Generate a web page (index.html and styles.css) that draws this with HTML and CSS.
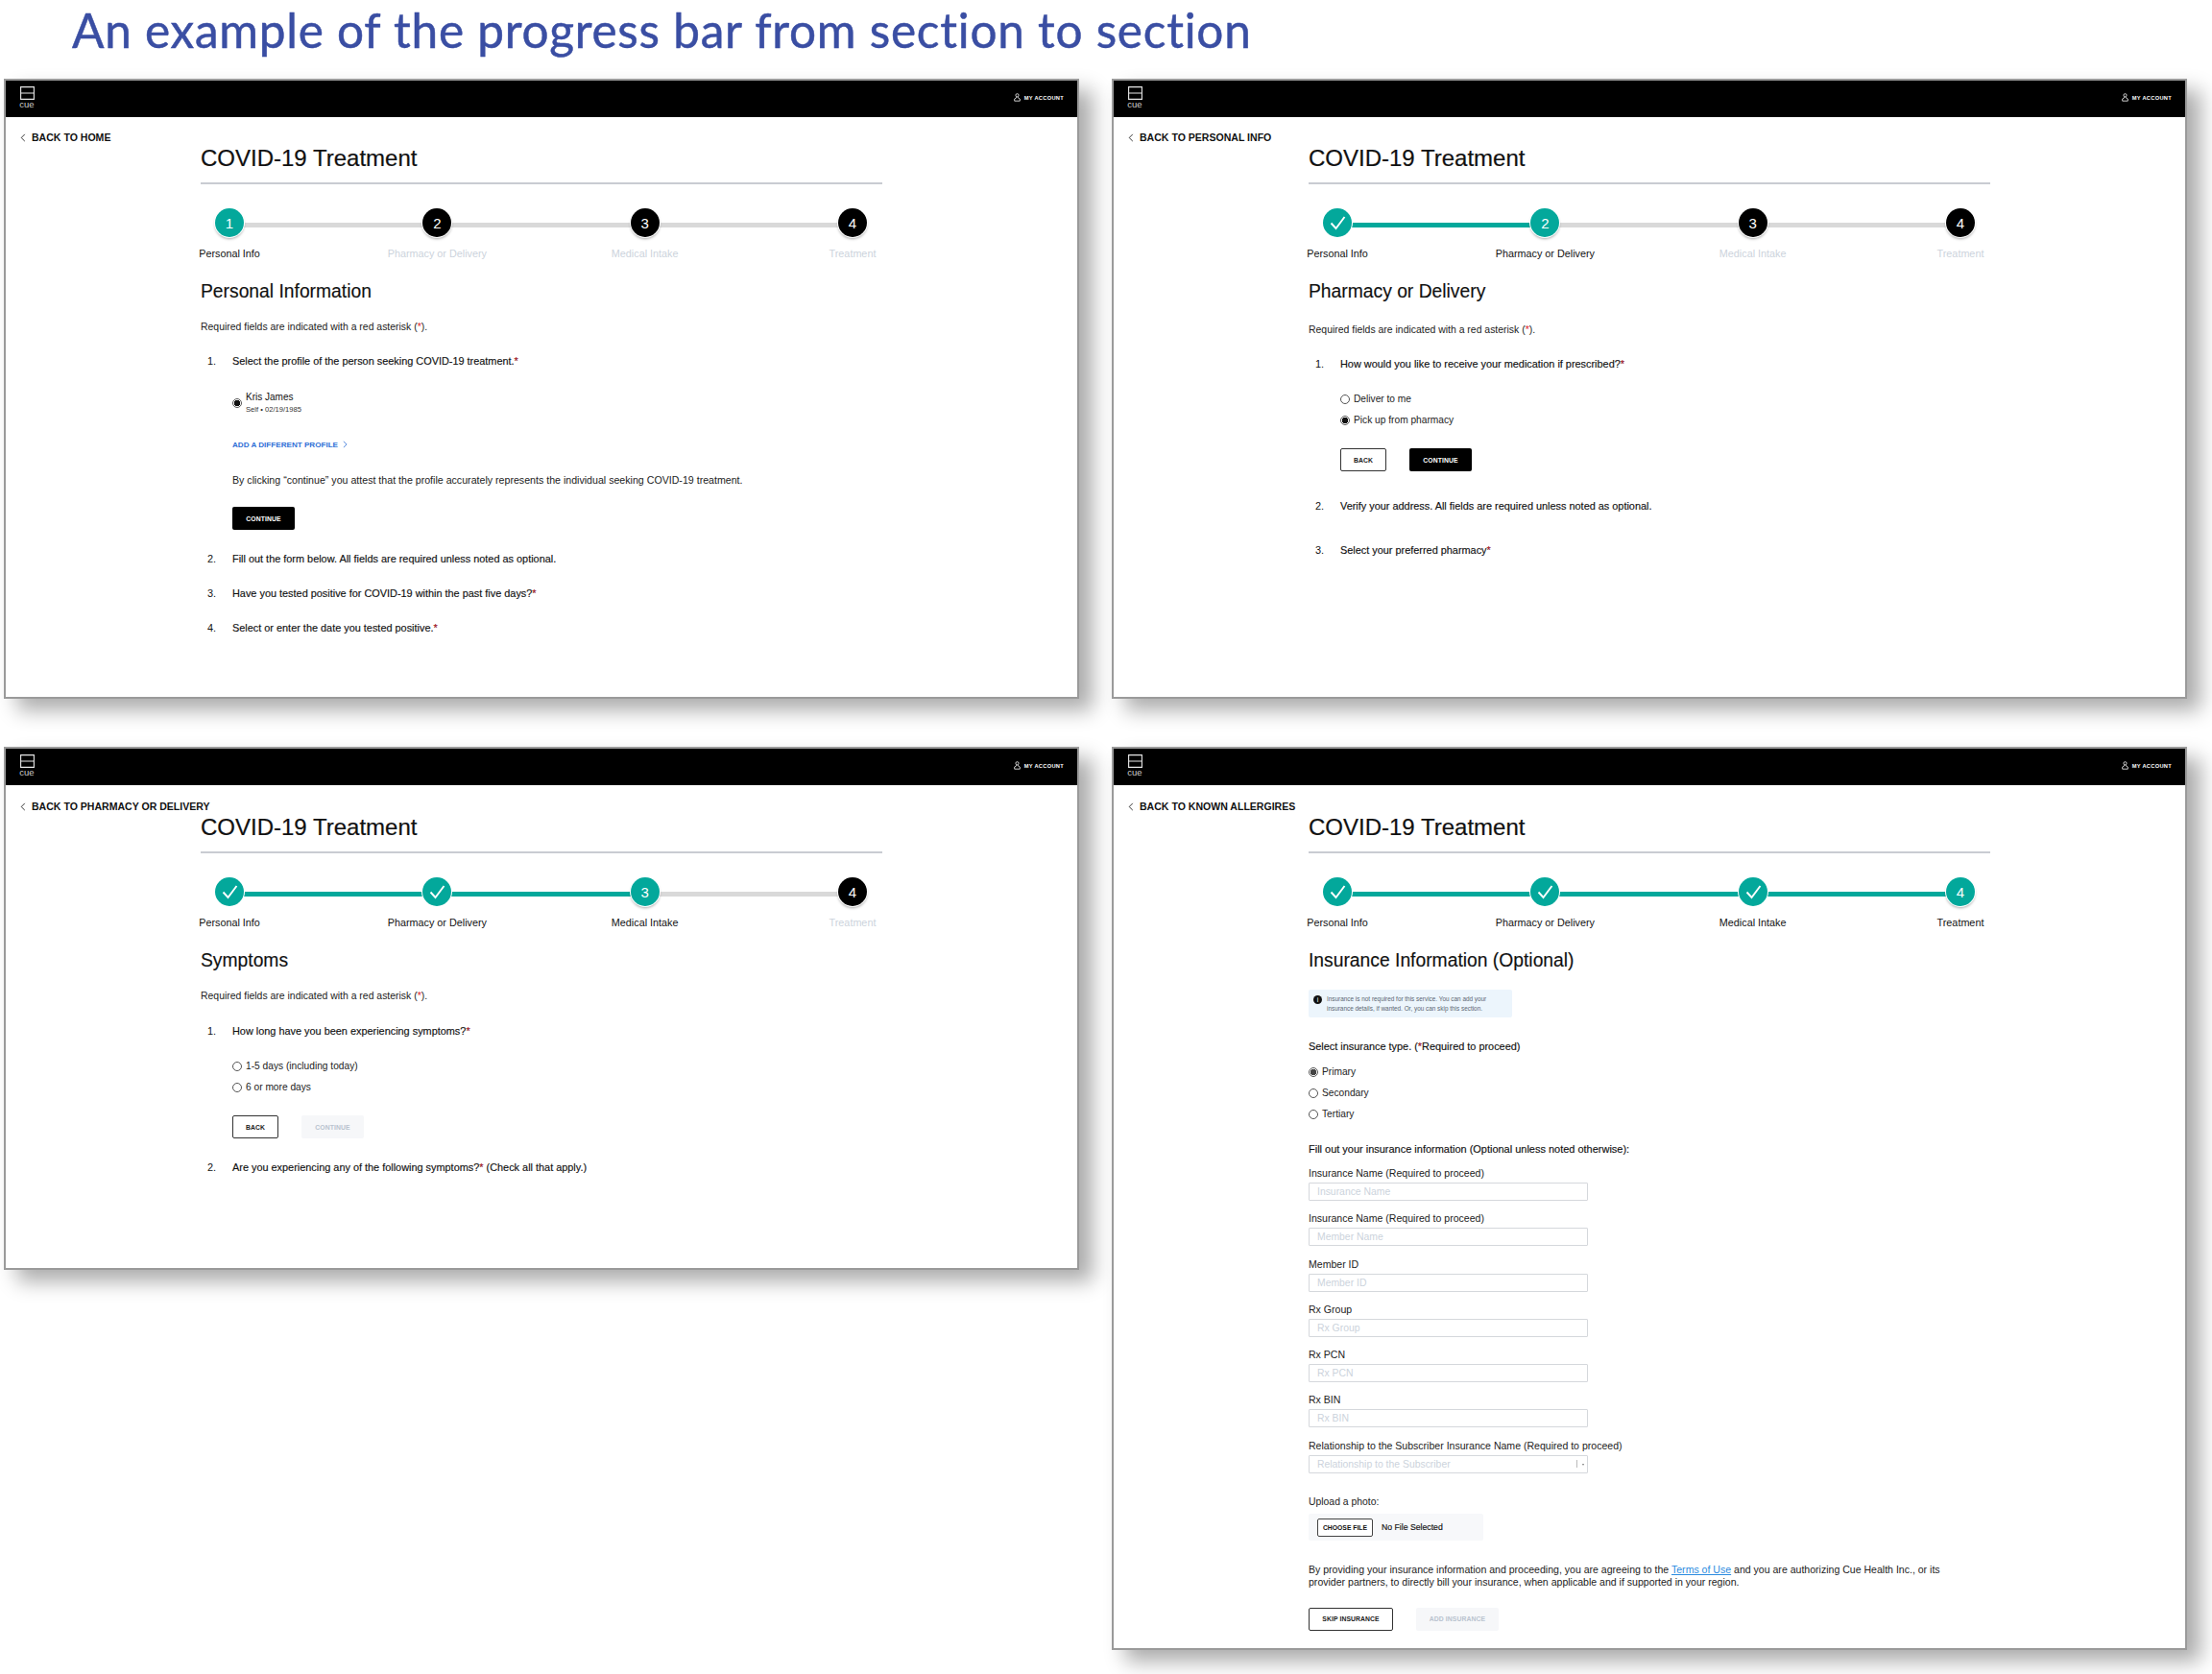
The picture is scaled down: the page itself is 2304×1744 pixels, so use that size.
FILE: index.html
```html
<!DOCTYPE html>
<html lang="en">
<head>
<meta charset="utf-8">
<title>Progress bar example</title>
<link rel="stylesheet" href="styles.css">
</head>
<body>
<h1 class="page-title">An example of the progress bar from section to section</h1>
<svg class="defs" width="0" height="0" aria-hidden="true">
  <symbol id="logo" viewBox="0 0 15 14"><path d="M.6.6h13.8v12.8H.6zM.6 7h13.8" fill="none" stroke="#e8e8e8" stroke-width="1.1"/></symbol>
  <symbol id="user" viewBox="0 0 8 10"><circle cx="4" cy="2.4" r="1.8" fill="none" stroke="#fff" stroke-width=".9"/><path d="M3 4.2v1.2L.8 6.8v2.4h6.4V6.8L5 5.4V4.2" fill="none" stroke="#fff" stroke-width=".9"/></symbol>
  <symbol id="chev" viewBox="0 0 6 10"><path d="M5 1 1 5l4 4" fill="none" stroke="#222" stroke-width="1"/></symbol>
  <symbol id="chev-blue" viewBox="0 0 6 10"><path d="M1 1l4 4-4 4" fill="none" stroke="#2f6fd6" stroke-width="1"/></symbol>
  <symbol id="check" viewBox="0 0 30 30"><path d="M8.5 15.5l5 5.5L22.5 9" fill="none" stroke="#fff" stroke-width="1.9"/></symbol>
</svg>
<main class="board">
  <div class="col">
    <section class="win win-a">
      <header class="bar"><div class="logo"><svg class="logo-mark"><use href="#logo"/></svg><span class="logo-text">cue</span></div><div class="account"><svg class="user-icon"><use href="#user"/></svg><span>MY ACCOUNT</span></div></header>
      <a class="back"><svg class="chev"><use href="#chev"/></svg>BACK TO HOME</a>
      <div class="content">
        <h2 class="title">COVID-19 Treatment</h2>
        <div class="stepper">
          <div class="step"><span class="dot cur">1</span><span class="lbl">Personal Info</span></div><i class="conn"></i>
          <div class="step"><span class="dot">2</span><span class="lbl off">Pharmacy or Delivery</span></div><i class="conn"></i>
          <div class="step"><span class="dot">3</span><span class="lbl off">Medical Intake</span></div><i class="conn"></i>
          <div class="step"><span class="dot">4</span><span class="lbl off">Treatment</span></div>
        </div>
        <h3 class="section">Personal Information</h3>
        <p class="req">Required fields are indicated with a red asterisk (<em>*</em>).</p>
        <div class="q q-first"><span class="n">1.</span><span class="qt">Select the profile of the person seeking COVID-19 treatment.<em>*</em></span></div>
        <div class="sub">
          <div class="profile"><span class="radio on"></span><div><div class="pname">Kris James</div><div class="pmeta">Self • 02/19/1985</div></div></div>
          <a class="add">ADD A DIFFERENT PROFILE<svg class="chev-r"><use href="#chev-blue"/></svg></a>
          <p class="attest">By clicking “continue” you attest that the profile accurately represents the individual seeking COVID-19 treatment.</p>
          <div class="btns btns-a"><span class="btn solid">CONTINUE</span></div>
        </div>
        <div class="q q-a2"><span class="n">2.</span><span class="qt">Fill out the form below. All fields are required unless noted as optional.</span></div>
        <div class="q q-a3"><span class="n">3.</span><span class="qt">Have you tested positive for COVID-19 within the past five days?<em>*</em></span></div>
        <div class="q q-a3"><span class="n">4.</span><span class="qt">Select or enter the date you tested positive.<em>*</em></span></div>
      </div>
    </section>
    <section class="win win-c">
      <header class="bar"><div class="logo"><svg class="logo-mark"><use href="#logo"/></svg><span class="logo-text">cue</span></div><div class="account"><svg class="user-icon"><use href="#user"/></svg><span>MY ACCOUNT</span></div></header>
      <a class="back"><svg class="chev"><use href="#chev"/></svg>BACK TO PHARMACY OR DELIVERY</a>
      <div class="content">
        <h2 class="title">COVID-19 Treatment</h2>
        <div class="stepper">
          <div class="step"><span class="dot done"><svg class="check"><use href="#check"/></svg></span><span class="lbl">Personal Info</span></div><i class="conn fill"></i>
          <div class="step"><span class="dot done"><svg class="check"><use href="#check"/></svg></span><span class="lbl">Pharmacy or Delivery</span></div><i class="conn fill"></i>
          <div class="step"><span class="dot cur">3</span><span class="lbl">Medical Intake</span></div><i class="conn"></i>
          <div class="step"><span class="dot">4</span><span class="lbl off">Treatment</span></div>
        </div>
        <h3 class="section">Symptoms</h3>
        <p class="req">Required fields are indicated with a red asterisk (<em>*</em>).</p>
        <div class="q q-first"><span class="n">1.</span><span class="qt">How long have you been experiencing symptoms?<em>*</em></span></div>
        <div class="sub">
          <div class="opts opts-c"><div class="opt"><span class="radio"></span>1-5 days (including today)</div><div class="opt"><span class="radio"></span>6 or more days</div></div>
          <div class="btns btns-c"><span class="btn ghost">BACK</span><span class="btn muted">CONTINUE</span></div>
        </div>
        <div class="q q-c2"><span class="n">2.</span><span class="qt">Are you experiencing any of the following symptoms?<em>*</em> (Check all that apply.)</span></div>
      </div>
    </section>
  </div>
  <div class="col">
    <section class="win win-b">
      <header class="bar"><div class="logo"><svg class="logo-mark"><use href="#logo"/></svg><span class="logo-text">cue</span></div><div class="account"><svg class="user-icon"><use href="#user"/></svg><span>MY ACCOUNT</span></div></header>
      <a class="back"><svg class="chev"><use href="#chev"/></svg>BACK TO PERSONAL INFO</a>
      <div class="content">
        <h2 class="title">COVID-19 Treatment</h2>
        <div class="stepper">
          <div class="step"><span class="dot done"><svg class="check"><use href="#check"/></svg></span><span class="lbl">Personal Info</span></div><i class="conn fill"></i>
          <div class="step"><span class="dot cur">2</span><span class="lbl">Pharmacy or Delivery</span></div><i class="conn"></i>
          <div class="step"><span class="dot">3</span><span class="lbl off">Medical Intake</span></div><i class="conn"></i>
          <div class="step"><span class="dot">4</span><span class="lbl off">Treatment</span></div>
        </div>
        <h3 class="section">Pharmacy or Delivery</h3>
        <p class="req req-b">Required fields are indicated with a red asterisk (<em>*</em>).</p>
        <div class="q q-first"><span class="n">1.</span><span class="qt">How would you like to receive your medication if prescribed?<em>*</em></span></div>
        <div class="sub">
          <div class="opts opts-b"><div class="opt"><span class="radio"></span>Deliver to me</div><div class="opt"><span class="radio on"></span>Pick up from pharmacy</div></div>
          <div class="btns btns-b"><span class="btn ghost">BACK</span><span class="btn solid">CONTINUE</span></div>
        </div>
        <div class="q q-b2"><span class="n">2.</span><span class="qt">Verify your address. All fields are required unless noted as optional.</span></div>
        <div class="q q-b3"><span class="n">3.</span><span class="qt">Select your preferred pharmacy<em>*</em></span></div>
      </div>
    </section>
    <section class="win win-d">
      <header class="bar"><div class="logo"><svg class="logo-mark"><use href="#logo"/></svg><span class="logo-text">cue</span></div><div class="account"><svg class="user-icon"><use href="#user"/></svg><span>MY ACCOUNT</span></div></header>
      <a class="back"><svg class="chev"><use href="#chev"/></svg>BACK TO KNOWN ALLERGIRES</a>
      <div class="content">
        <h2 class="title">COVID-19 Treatment</h2>
        <div class="stepper">
          <div class="step"><span class="dot done"><svg class="check"><use href="#check"/></svg></span><span class="lbl">Personal Info</span></div><i class="conn fill"></i>
          <div class="step"><span class="dot done"><svg class="check"><use href="#check"/></svg></span><span class="lbl">Pharmacy or Delivery</span></div><i class="conn fill"></i>
          <div class="step"><span class="dot done"><svg class="check"><use href="#check"/></svg></span><span class="lbl">Medical Intake</span></div><i class="conn fill"></i>
          <div class="step"><span class="dot cur">4</span><span class="lbl">Treatment</span></div>
        </div>
        <h3 class="section">Insurance Information (Optional)</h3>
        <div class="notice"><span class="info">i</span><p>Insurance is not required for this service. You can add your insurance details, if wanted. Or, you can skip this section.</p></div>
        <p class="ins-type strong">Select insurance type. (<em>*</em>Required to proceed)</p>
        <div class="ins-opts"><div class="opt"><span class="radio on soft"></span>Primary</div><div class="opt"><span class="radio"></span>Secondary</div><div class="opt"><span class="radio"></span>Tertiary</div></div>
        <p class="fill-out strong">Fill out your insurance information (Optional unless noted otherwise):</p>
        <div class="fields">
          <div class="field"><label>Insurance Name (Required to proceed)</label><div class="input">Insurance Name</div></div>
          <div class="field"><label>Insurance Name (Required to proceed)</label><div class="input">Member Name</div></div>
          <div class="field"><label>Member ID</label><div class="input">Member ID</div></div>
          <div class="field"><label>Rx Group</label><div class="input">Rx Group</div></div>
          <div class="field"><label>Rx PCN</label><div class="input">Rx PCN</div></div>
          <div class="field"><label>Rx BIN</label><div class="input">Rx BIN</div></div>
          <div class="field"><label>Relationship to the Subscriber Insurance Name (Required to proceed)</label><div class="input select">Relationship to the Subscriber<span class="caret"></span></div></div>
        </div>
        <p class="upload">Upload a photo:</p>
        <div class="filebox"><span class="filebtn">CHOOSE FILE</span><span class="nofile">No File Selected</span></div>
        <p class="terms">By providing your insurance information and proceeding, you are agreeing to the <a>Terms of Use</a> and you are authorizing Cue Health Inc., or its provider partners, to directly bill your insurance, when applicable and if supported in your region.</p>
        <div class="btns btns-d"><span class="btn ghost wide">SKIP INSURANCE</span><span class="btn muted wide2">ADD INSURANCE</span></div>
      </div>
    </section>
  </div>
</main>
</body>
</html>
```

FILE: styles.css
```css
* { box-sizing: border-box; }
html, body { margin: 0; padding: 0; background: #fff; }
body { width: 2304px; height: 1744px; overflow: hidden; font-family: "Liberation Sans", Arial, sans-serif; color: #111; position: relative; }
p, h1, h2, h3 { margin: 0; font-weight: 400; }
em { font-style: normal; color: #e0202a; }
.defs { position: absolute; }

.page-title { height: 82px; padding: 0 0 0 75px; font-family: "Lato", sans-serif; font-size: 49.5px; line-height: 63px; color: #3a4ea3; letter-spacing: 0.76px; -webkit-text-stroke: .5px #3a4ea3; white-space: nowrap; }

.board { display: grid; grid-template-columns: 1120px 1120px; column-gap: 34px; padding-left: 4px; }
.col { display: flex; flex-direction: column; gap: 50px; }
.win { border: 2px solid #9a9a9a; background: #fff; box-shadow: 14px 12px 20px rgba(0,0,0,.33); display: flex; flex-direction: column; }
.win-a, .win-b { height: 646px; }
.win-c { height: 545px; }
.win-d { height: 941px; }

.bar { height: 38px; background: #000; display: flex; justify-content: space-between; padding: 6px 14px 0 14px; flex: none; }
.logo { width: 16px; display: flex; flex-direction: column; align-items: center; }
.logo-mark { width: 15px; height: 14px; }
.logo-text { font-size: 9.5px; line-height: 9px; color: #ccc; }
.account { display: flex; align-items: center; height: 23px; gap: 4px; color: #fff; font-size: 5.7px; font-weight: 700; letter-spacing: .3px; }
.user-icon { width: 7px; height: 9px; }

.back { display: flex; align-items: center; height: 16px; margin: 13px 0 0 15px; font-size: 10.55px; font-weight: 700; color: #111; flex: none; }
.win-c .back, .win-d .back { margin-top: 14px; }
.chev { width: 6px; height: 9px; margin-right: 6px; }

.content { padding-left: 203px; width: 1116px; }
.title { width: 710px; height: 41px; margin-top: 0; font-size: 24px; line-height: 28px; border-bottom: 2px solid #c9ccd2; -webkit-text-stroke: .2px #111; }

.stepper { width: 709px; margin-top: 25px; padding: 0 15px; display: flex; align-items: flex-start; }
.step { width: 30px; flex: none; display: flex; flex-direction: column; align-items: center; }
.dot { width: 30px; height: 30px; border-radius: 50%; background: #000; color: #fff; font-size: 15px; display: flex; align-items: center; justify-content: center; box-shadow: 0 0 0 1px #fff, 0 2px 3px rgba(0,0,0,.35); position: relative; z-index: 1; }
.dot.cur { background: #03a89b; }
.dot.done { background: #03a89b; box-shadow: 0 0 0 1px #fff; }
.check { width: 30px; height: 30px; }
.conn { flex: 1; height: 5px; margin-top: 15px; background: #d9d9d9; }
.conn.fill { background: #03a89b; }
.lbl { margin-top: 10px; line-height: 14px; font-size: 10.8px; white-space: nowrap; color: #111; }
.lbl.off { color: #ccd3dc; }

.section { margin-top: 21px; font-size: 19.3px; line-height: 24px; -webkit-text-stroke: .15px #111; }
.req { margin-top: 18px; font-size: 10.45px; line-height: 14px; color: #222; }
.req-b { margin-top: 21px; }

.q { display: flex; padding-left: 7px; font-size: 10.9px; line-height: 14px; }
.q-first { margin-top: 21px; }
.win-c .q-first { margin-top: 22px; }
.n { width: 26px; flex: none; }
.qt { -webkit-text-stroke: .15px #111; }
.q-a2 { margin-top: 23px; }
.q-a3 { margin-top: 22px; }
.q-b2 { margin-top: 29px; }
.q-b3 { margin-top: 32px; }
.q-c2 { margin-top: 23px; }

.sub { padding-left: 33px; }
.radio { width: 10px; height: 10px; flex: none; border: 1px solid #555; border-radius: 50%; background: #fff; display: block; }
.radio.on { background: radial-gradient(circle, #111 0 3px, #fff 3.5px); }
.radio.on.soft { background: radial-gradient(circle, #444 0 3px, #fff 3.5px); }

.profile { display: flex; align-items: center; gap: 4px; margin-top: 23px; height: 28px; }
.pname { font-size: 10px; line-height: 13px; }
.pmeta { font-size: 7.6px; line-height: 13px; color: #333; }
.add { display: flex; align-items: center; margin-top: 22px; height: 14px; font-size: 8.1px; font-weight: 700; color: #2f6fd6; }
.chev-r { width: 5px; height: 8px; margin-left: 5px; }
.attest { margin-top: 23px; font-size: 10.63px; line-height: 14px; color: #222; }

.btns { display: flex; gap: 24px; }
.btns-a { margin-top: 21px; }
.btns-b { margin-top: 22px; }
.btns-c { margin-top: 22px; }
.btns-d { margin-top: 20px; }
.btn { height: 24px; border-radius: 2px; display: flex; align-items: center; justify-content: center; font-size: 6.8px; font-weight: 700; letter-spacing: .1px; width: 65px; }
.btn.solid { background: #000; color: #fff; }
.btn.ghost { width: 48px; border: 1px solid #333; color: #222; background: #fff; }
.btn.muted { background: #f6f7f9; color: #b9c3cf; }
.btn.wide { width: 88px; }
.btn.wide2 { width: 86px; }

.opts { display: flex; flex-direction: column; gap: 8px; }
.opts-b { margin-top: 23px; }
.opts-c { margin-top: 23px; }
.opt { display: flex; align-items: center; gap: 4px; height: 14px; font-size: 10.2px; line-height: 14px; color: #222; }

.notice { width: 212px; height: 29px; margin-top: 18px; padding: 5px 8px 0 5px; background: #ecf5fc; border-radius: 2px; display: flex; gap: 5px; }
.info { width: 9px; height: 9px; flex: none; border-radius: 50%; background: #111; color: #fff; font-size: 7px; line-height: 9px; text-align: center; margin-top: 1px; }
.notice p { font-size: 6.4px; line-height: 10px; color: #5b6672; }
.strong { -webkit-text-stroke: .15px #111; }
.ins-type { margin-top: 23px; font-size: 10.9px; line-height: 14px; }
.ins-opts { margin-top: 13px; display: flex; flex-direction: column; gap: 8px; }
.fill-out { margin-top: 22px; font-size: 10.97px; line-height: 14px; }

.fields { margin-top: 11px; display: flex; flex-direction: column; gap: 11.3px; }
.field { display: flex; flex-direction: column; gap: 3px; }
.field label { font-size: 10.55px; line-height: 14px; color: #222; }
.input { width: 291px; height: 19px; border: 1px solid #d5d8dc; border-radius: 1px; padding-left: 8px; font-size: 10.4px; line-height: 18px; color: #ccd3dc; position: relative; }
.caret { position: absolute; right: 3px; top: 8px; border: 1.5px solid transparent; border-top: 2px solid #777; }
.caret::before { content: ""; position: absolute; right: 6px; top: -6px; width: 1px; height: 8px; background: #bbb; }

.upload { margin-top: 23px; font-size: 10.4px; line-height: 14px; color: #222; }
.filebox { width: 182px; height: 28px; margin-top: 5px; background: #f7f8fa; border-radius: 2px; padding: 5px 0 0 9px; display: flex; align-items: flex-start; gap: 9px; }
.filebtn { width: 58px; height: 19px; border: 1px solid #444; border-radius: 2px; background: #fff; font-size: 6.8px; font-weight: 700; display: flex; align-items: center; justify-content: center; }
.nofile { font-size: 8.7px; line-height: 19px; -webkit-text-stroke: .15px #111; }
.terms { width: 680px; margin-top: 24px; font-size: 10.56px; line-height: 13px; color: #222; }
.terms a { color: #2b8be0; text-decoration: underline; }
```
